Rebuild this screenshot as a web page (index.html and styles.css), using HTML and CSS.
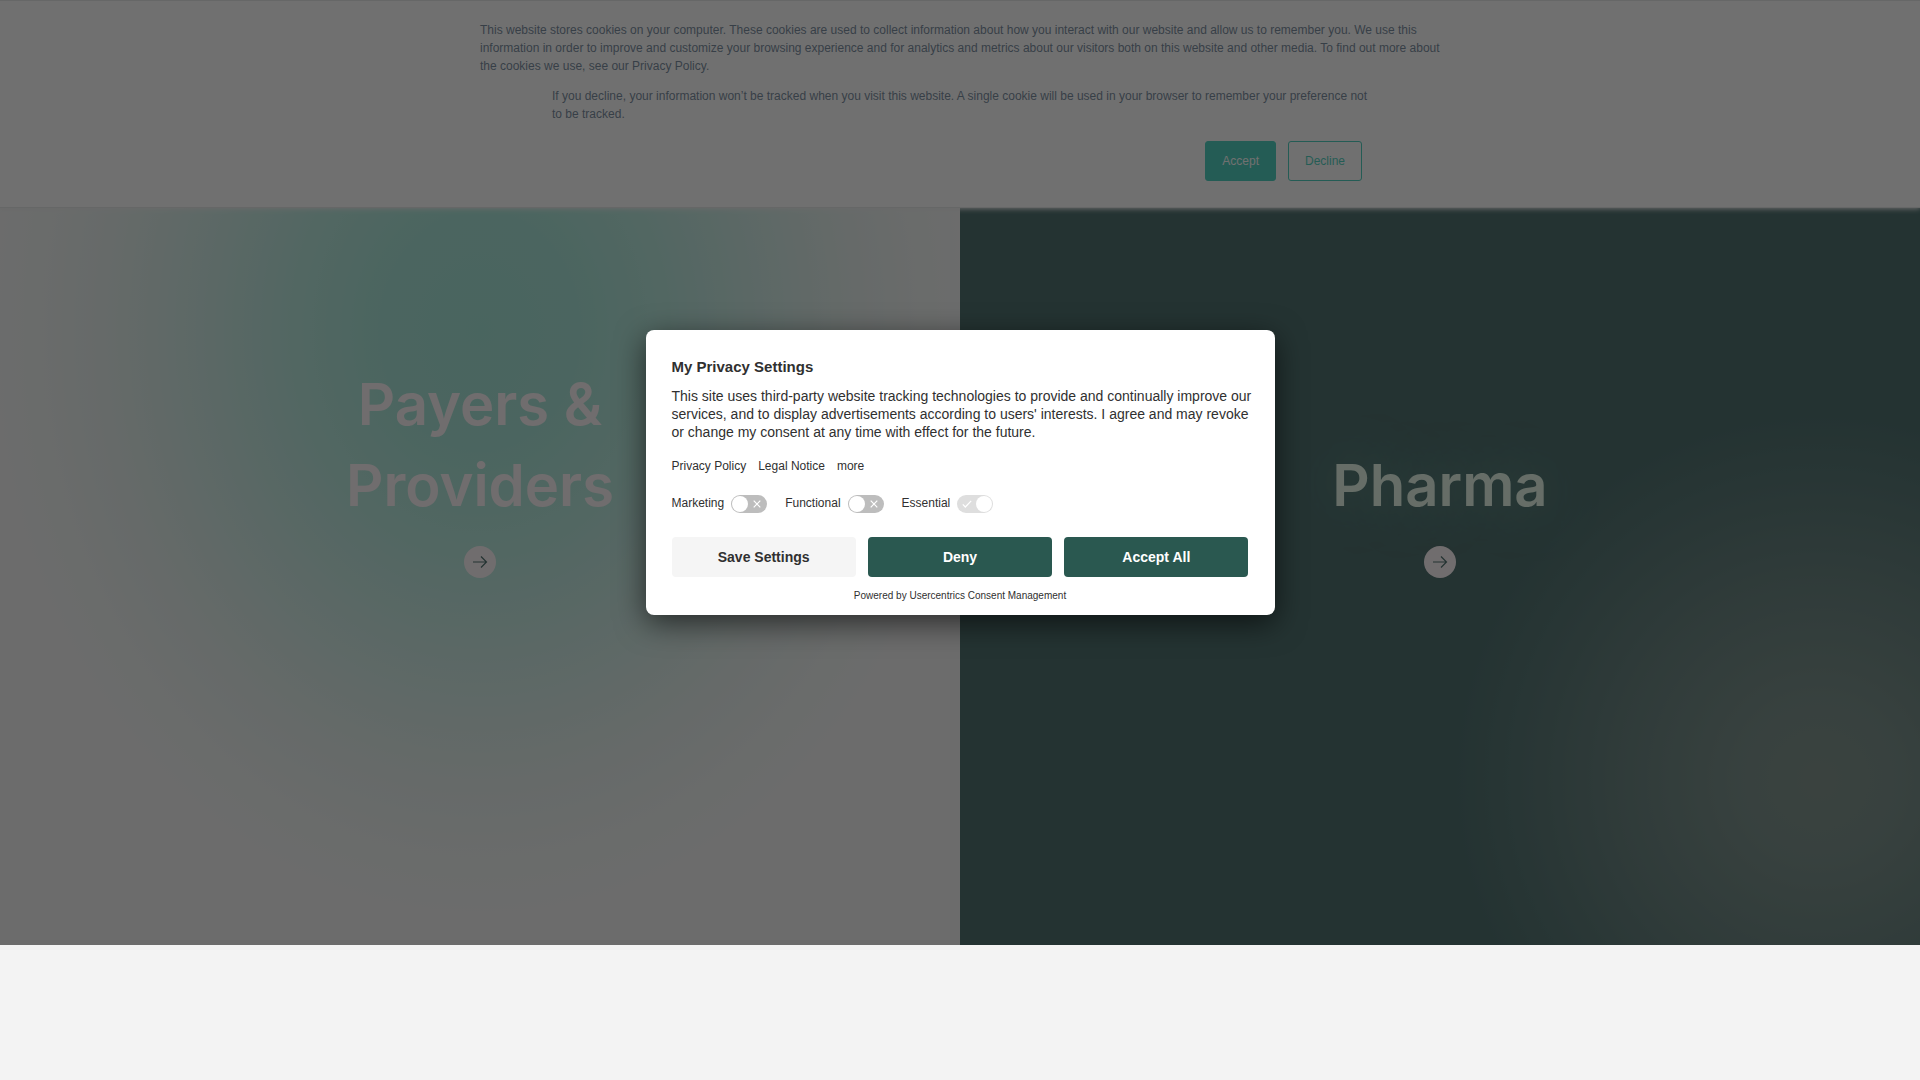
FILE: index.html
```html
<!DOCTYPE html>
<html lang="en">
<head>
    <meta charset="UTF-8">
    <meta name="viewport" content="width=device-width, initial-scale=1.0">
    <title>Payers &amp; Providers | Pharma</title>
    <link rel="stylesheet" href="styles.css">
</head>
<body>
    <div class="page">
        <main class="hero">
            <section class="panel panel-payers">
                <h2>Payers &amp; Providers</h2>
                <a class="arrow" href="#payers" aria-label="Payers &amp; Providers">
                    <svg width="16" height="16" viewBox="0 0 16 16"><path d="M1 8h13.500M9 2.500 14.500 8 9 13.500"/></svg>
                </a>
            </section>
            <section class="panel panel-pharma">
                <h2>Pharma</h2>
                <a class="arrow" href="#pharma" aria-label="Pharma">
                    <svg width="16" height="16" viewBox="0 0 16 16"><path d="M1 8h13.500M9 2.500 14.500 8 9 13.500"/></svg>
                </a>
            </section>
        </main>

        <div class="cookie-bar">
            <div class="cookie-inner">
                <p>This website stores cookies on your computer. These cookies are used to collect information about how you interact with our website and allow us to remember you. We use this information in order to improve and customize your browsing experience and for analytics and metrics about our visitors both on this website and other media. To find out more about the cookies we use, see our Privacy Policy.</p>
                <div class="cookie-decline">
                    <p>If you decline, your information won’t be tracked when you visit this website. A single cookie will be used in your browser to remember your preference not to be tracked.</p>
                    <div class="cookie-buttons">
                        <button type="button" class="cookie-btn accept">Accept</button>
                        <button type="button" class="cookie-btn">Decline</button>
                    </div>
                </div>
            </div>
        </div>

        <div class="overlay">
            <div class="modal" role="dialog" aria-labelledby="privacy-title">
                <h1 id="privacy-title">My Privacy Settings</h1>
                <p class="description">This site uses third-party website tracking technologies to provide and continually improve our services, and to display advertisements according to users' interests. I agree and may revoke or change my consent at any time with effect for the future.</p>

                <div class="links">
                    <a href="#privacy">Privacy Policy</a>
                    <a href="#legal">Legal Notice</a>
                    <a href="#more">more</a>
                </div>

                <div class="categories">
                    <div class="category">
                        <label for="marketing">Marketing</label>
                        <span class="switch">
                            <input type="checkbox" id="marketing">
                            <svg class="off" width="8" height="8" viewBox="0 0 8 8"><path d="M.7.7l6.600 6.600M7.300.7.7 7.300"/></svg>
                        </span>
                    </div>
                    <div class="category">
                        <label for="functional">Functional</label>
                        <span class="switch">
                            <input type="checkbox" id="functional">
                            <svg class="off" width="8" height="8" viewBox="0 0 8 8"><path d="M.7.7l6.600 6.600M7.300.7.7 7.300"/></svg>
                        </span>
                    </div>
                    <div class="category">
                        <label for="essential">Essential</label>
                        <span class="switch">
                            <input type="checkbox" id="essential" checked disabled>
                            <svg class="on" width="10" height="8" viewBox="0 0 10 8"><path d="M.8 4.300 3.300 7 9.200.8"/></svg>
                        </span>
                    </div>
                </div>

                <div class="actions">
                    <button type="button" class="btn btn-save">Save Settings</button>
                    <button type="button" class="btn">Deny</button>
                    <button type="button" class="btn">Accept All</button>
                </div>
                <div class="powered">Powered by <a href="#usercentrics">Usercentrics Consent Management</a></div>
            </div>
        </div>
    </div>
</body>
</html>
```
FILE: styles.css
```css
* {
    box-sizing: border-box;
}

body {
    margin: 0;
    background: #f3f3f3;
    font-family: "Liberation Sans", Arial, sans-serif;
    color: #303030;
}

a {
    color: inherit;
    text-decoration: none;
}

.page {
    position: relative;
}

/* split hero */
.hero {
    display: grid;
    grid-template-columns: 1fr 1fr;
    min-height: 87.5vh;
}

.panel {
    display: flex;
    flex-direction: column;
    align-items: center;
    justify-content: center;
    gap: 20px;
    padding-bottom: 4px;
}

.panel h2 {
    display: flex;
    align-items: flex-end;
    max-width: 320px;
    min-height: 162px;
    margin: 0;
    font-family: Inter, sans-serif;
    font-size: 58px;
    font-weight: 600;
    line-height: 81px;
    text-align: center;
    color: #fff4f7;
}

.panel-payers {
    background: radial-gradient(500px 600px at 50% 35%, #7edbc7 0%, #84dbc8 20%, #9ce0d1 38%, #bce5dc 56%, #dbeae6 74%, #eaf0ee 88%, #f2f2f2 100%) #f2f2f2;
}

.panel-pharma {
    background: radial-gradient(370px 370px at 89.5% 82.5%, #4c675c 0%, #42625a 22%, #2a504b 52%, #0f3d3a 82%, #013330 100%) #013330;
}

.panel-pharma h2 {
    color: #dcf6e2;
    text-shadow: 0 0 50px #2f6a60;
}

.arrow {
    display: flex;
    align-items: center;
    justify-content: center;
    width: 32px;
    height: 32px;
    border-radius: 50%;
    background: #fff4f7;
}

.arrow svg {
    fill: none;
    stroke: #013330;
    stroke-width: 1.2;
}

/* cookie bar over the hero */
.cookie-bar {
    position: absolute;
    top: 0;
    left: 0;
    right: 0;
    border: solid #dde0e2;
    border-width: 1px 0;
    background: #fff;
    box-shadow: 0 1px 5px #eaeaea;
    font-size: 12px;
    line-height: 18px;
    color: #425b76;
}

.cookie-inner {
    max-width: 1000px;
    margin: 0 auto;
    padding: 20px 20px 14px;
}

.cookie-inner p {
    margin: 0 0 12px;
}

.cookie-decline {
    padding: 0 72px;
}

.cookie-buttons {
    display: flex;
    justify-content: flex-end;
    gap: 12px;
    padding: 6px 6px 12px 0;
}

.cookie-btn {
    height: 40px;
    padding: 0 16px;
    border: 1px solid #00bda5;
    border-radius: 3px;
    background: none;
    color: #00bda5;
    font: inherit;
    cursor: pointer;
}

.cookie-btn.accept {
    background: #00bda5;
    color: #fff;
}

/* consent dialog */
.overlay {
    position: absolute;
    inset: 0;
    display: flex;
    align-items: center;
    justify-content: center;
    background: rgba(51, 51, 51, 0.7);
}

.modal {
    width: 100%;
    max-width: 629px;
    padding: 26px 26px 10px;
    border-radius: 8px;
    background: #fff;
    box-shadow: 0 8px 30px rgba(0, 0, 0, 0.6);
}

.modal h1 {
    margin: 0 0 9px;
    font-size: 15px;
    line-height: 22px;
}

/* runs slightly into the side padding so the first line holds */
.description {
    margin: 0 -8px 16px 0;
    font-size: 14px;
    line-height: 18px;
}

.links {
    display: flex;
    gap: 12px;
    margin-bottom: 20px;
    font-size: 12px;
    line-height: 18px;
}

.categories {
    display: flex;
    gap: 18px;
    margin-bottom: 24px;
}

.category {
    display: flex;
    gap: 7px;
    font-size: 12px;
    line-height: 16px;
}

.switch {
    position: relative;
    height: 18px;
}

.switch input {
    appearance: none;
    display: block;
    width: 36px;
    height: 18px;
    margin: 0;
    padding: 1px;
    border-radius: 9px;
    background: #bdbdbd;
}

.switch input::before {
    content: "";
    display: block;
    width: 16px;
    height: 16px;
    border-radius: 50%;
    background: #fff;
}

.switch input:checked::before {
    margin-left: auto;
}

.switch input:disabled {
    background: #dedede;
}

.switch svg {
    position: absolute;
    top: 5px;
    fill: none;
    stroke: #fff;
    stroke-width: 1.2;
    pointer-events: none;
}

.switch .off {
    right: 6px;
}

.switch .on {
    left: 5px;
}

.actions {
    display: grid;
    grid-template-columns: repeat(3, 1fr);
    gap: 12px;
    margin-bottom: 10px;
}

.btn {
    height: 40px;
    border: none;
    border-radius: 4px;
    background: #2a5850;
    color: #fff;
    font-family: inherit;
    font-size: 14px;
    font-weight: bold;
    cursor: pointer;
}

.btn-save {
    background: #f5f5f5;
    color: #303030;
}

.powered {
    font-size: 10px;
    line-height: 18px;
    text-align: center;
}
```
